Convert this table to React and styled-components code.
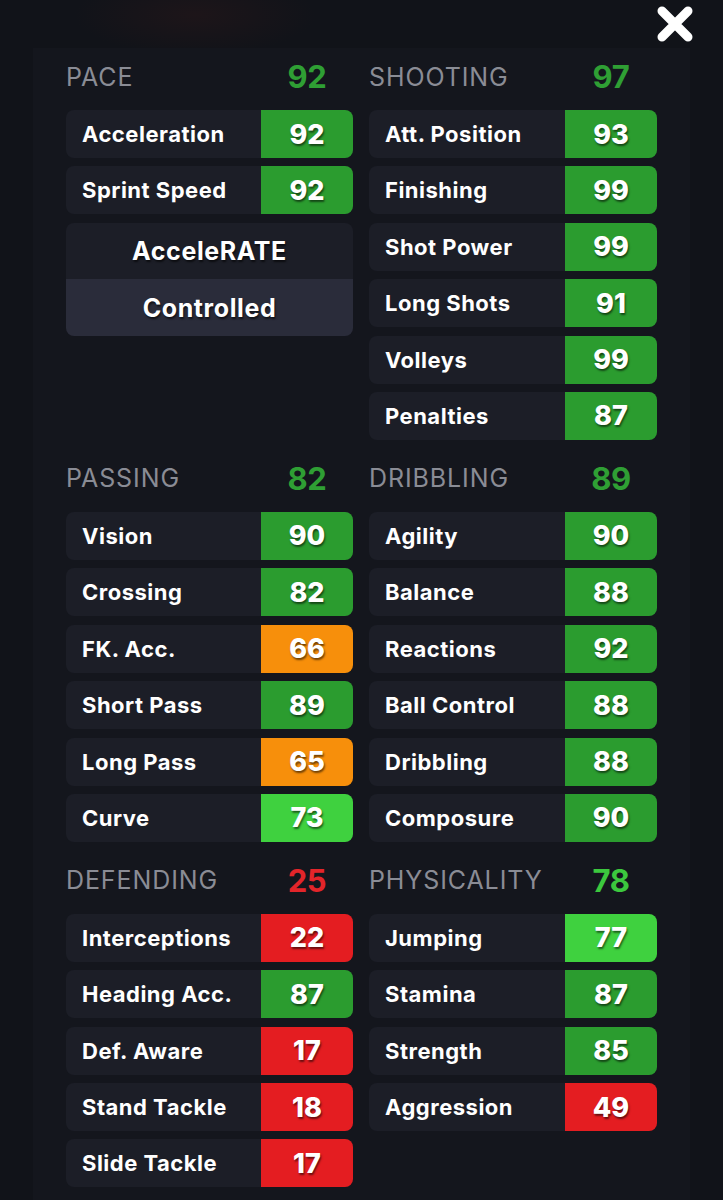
import React from "react";
import styled, { createGlobalStyle } from "styled-components";

const GlobalStyle = createGlobalStyle`
  html, body {
    margin: 0;
    padding: 0;
    background: #111319;
  }
  body {
    font-family: "Inter", "Noto Sans", sans-serif;
    color: #fff;
  }
`;

const COLORS = {
  green: "#2b9c2f",
  lime: "#3fd13f",
  orange: "#f78f0b",
  red: "#e41d21",
};

const HEAD_COLORS = {
  green: "#2f9f34",
  lime: "#3cc83e",
  red: "#e3252a",
};

const sections = [
  {
    title: "PACE",
    value: 92,
    tone: "green",
    stats: [
      ["Acceleration", 92, "green"],
      ["Sprint Speed", 92, "green"],
    ],
    accel: ["AcceleRATE", "Controlled"],
  },
  {
    title: "SHOOTING",
    value: 97,
    tone: "green",
    stats: [
      ["Att. Position", 93, "green"],
      ["Finishing", 99, "green"],
      ["Shot Power", 99, "green"],
      ["Long Shots", 91, "green"],
      ["Volleys", 99, "green"],
      ["Penalties", 87, "green"],
    ],
  },
  {
    title: "PASSING",
    value: 82,
    tone: "green",
    stats: [
      ["Vision", 90, "green"],
      ["Crossing", 82, "green"],
      ["FK. Acc.", 66, "orange"],
      ["Short Pass", 89, "green"],
      ["Long Pass", 65, "orange"],
      ["Curve", 73, "lime"],
    ],
  },
  {
    title: "DRIBBLING",
    value: 89,
    tone: "green",
    stats: [
      ["Agility", 90, "green"],
      ["Balance", 88, "green"],
      ["Reactions", 92, "green"],
      ["Ball Control", 88, "green"],
      ["Dribbling", 88, "green"],
      ["Composure", 90, "green"],
    ],
  },
  {
    title: "DEFENDING",
    value: 25,
    tone: "red",
    stats: [
      ["Interceptions", 22, "red"],
      ["Heading Acc.", 87, "green"],
      ["Def. Aware", 17, "red"],
      ["Stand Tackle", 18, "red"],
      ["Slide Tackle", 17, "red"],
    ],
  },
  {
    title: "PHYSICALITY",
    value: 78,
    tone: "lime",
    stats: [
      ["Jumping", 77, "lime"],
      ["Stamina", 87, "green"],
      ["Strength", 85, "green"],
      ["Aggression", 49, "red"],
    ],
  },
];

const Page = styled.div`
  position: relative;
  width: 723px;
  height: 1200px;
  overflow: hidden;
  background: radial-gradient(ellipse 120px 40px at 195px 15px, #1d1519 0%, #111319 100%);
  padding-top: 48px;
  box-sizing: border-box;
`;

const Close = styled.button`
  position: absolute;
  top: 6px;
  right: 30px;
  width: 36px;
  height: 36px;
  padding: 0;
  border: none;
  background: none;
  cursor: pointer;
`;

const Panel = styled.div`
  margin-left: 33px;
  width: 657px;
  min-height: 1152px;
  box-sizing: border-box;
  background: #14161d;
  padding: 10px 33px 0;
  display: grid;
  grid-template-columns: 287px 288px;
  column-gap: 16px;
  row-gap: 20px;
  align-content: start;
`;

const Section = styled.section`
  display: flex;
  flex-direction: column;
`;

const Header = styled.div`
  display: grid;
  grid-template-columns: 1fr 92px;
  align-items: center;
  height: 36px;
  margin-bottom: 16px;
`;

const HeaderTitle = styled.span`
  font-size: 25px;
  font-weight: 400;
  color: #8a8c95;
  letter-spacing: 0.9px;
`;

const HeaderValue = styled.span`
  text-align: center;
  font-size: 31px;
  font-weight: 700;
  color: ${({ $tone }) => HEAD_COLORS[$tone]};
  letter-spacing: -0.3px;
`;

const Rows = styled.div`
  display: flex;
  flex-direction: column;
  gap: 8.4px;
`;

const Row = styled.div`
  display: grid;
  grid-template-columns: 1fr 92px;
  height: 48px;
  border-radius: 8px;
  overflow: hidden;
  background: #1c1e27;
`;

const Name = styled.span`
  display: flex;
  align-items: center;
  padding-left: 16px;
  font-size: 22px;
  font-weight: 700;
  color: #fff;
  letter-spacing: 0.5px;
`;

const Value = styled.span`
  display: flex;
  align-items: center;
  justify-content: center;
  background: ${({ $tone }) => COLORS[$tone]};
  font-size: 27px;
  font-weight: 800;
  color: #fff;
  text-shadow: 1px 2px 2px rgba(0, 0, 0, 0.55);
`;

const AccelBox = styled.div`
  display: flex;
  flex-direction: column;
  border-radius: 8px;
  overflow: hidden;
`;

const AccelCell = styled.div`
  height: 56.5px;
  display: flex;
  align-items: center;
  justify-content: center;
  background: ${({ $alt }) => ($alt ? "#2a2c3a" : "#1c1e27")};
  font-size: 25px;
  font-weight: 700;
  letter-spacing: 0.6px;
  color: #fff;
  text-shadow: 1px 2px 2px rgba(0, 0, 0, 0.6);
`;

const StatSection = ({ data }) => (
  <Section>
    <Header>
      <HeaderTitle>{data.title}</HeaderTitle>
      <HeaderValue $tone={data.tone}>{data.value}</HeaderValue>
    </Header>
    <Rows>
      {data.stats.map(([name, val, tone]) => (
        <Row key={name}>
          <Name>{name}</Name>
          <Value $tone={tone}>{val}</Value>
        </Row>
      ))}
      {data.accel && (
        <AccelBox>
          <AccelCell>{data.accel[0]}</AccelCell>
          <AccelCell $alt>{data.accel[1]}</AccelCell>
        </AccelBox>
      )}
    </Rows>
  </Section>
);

const App = () => (
  <Page>
    <GlobalStyle />
    <Close aria-label="Close">
      <svg width="36" height="36" viewBox="0 0 36 36">
        <path
          d="M5 5 L31 31 M31 5 L5 31"
          stroke="#fff"
          strokeWidth="9"
          strokeLinecap="round"
        />
      </svg>
    </Close>
    <Panel>
      {sections.map((s) => (
        <StatSection key={s.title} data={s} />
      ))}
    </Panel>
  </Page>
);

export default App;
